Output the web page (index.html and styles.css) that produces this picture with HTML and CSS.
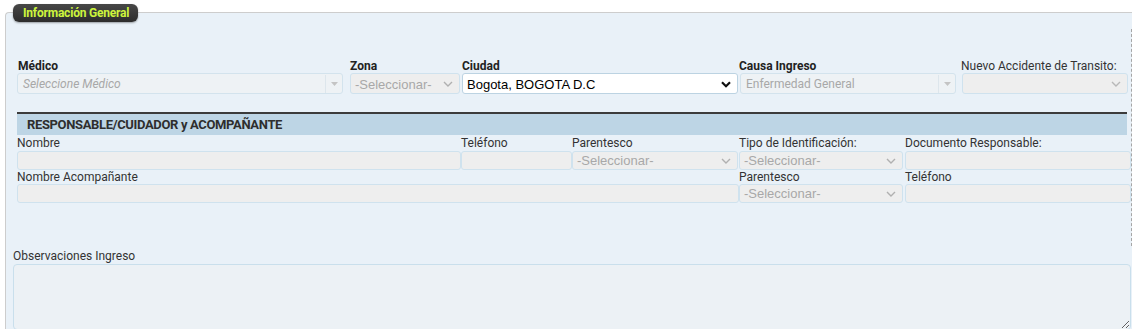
FILE: index.html
```html
<!DOCTYPE html>
<html lang="es">
<head>
<meta charset="utf-8">
<title>Información General</title>
<link rel="stylesheet" href="styles.css">
</head>
<body>
<div class="panel">
  <div class="legend">Información General</div>
  <div class="content">
    <div class="row row1">
      <div class="field f-medico">
        <label class="lbl bold">Médico</label>
        <div class="ctl s2 w-medico">
          <span class="ph italic">Seleccione Médico</span>
          <span class="s2arrow"><svg width="7" height="4" viewBox="0 0 7 4"><path d="M0 0H7L3.5 4Z" fill="#c4c4c4"/></svg></span>
        </div>
      </div>
      <div class="field f-zona">
        <label class="lbl bold">Zona</label>
        <div class="ctl dis sel w-zona">
          <span class="ph arial">-Seleccionar-</span>
          <svg class="chev" width="10" height="6" viewBox="0 0 10 6"><path d="M1 1L5 5L9 1" fill="none" stroke="#b0b0b0" stroke-width="1.4"/></svg>
        </div>
      </div>
      <div class="field f-ciudad">
        <label class="lbl bold">Ciudad</label>
        <div class="ctl white sel w-ciudad">
          <span class="val arial">Bogota, BOGOTA D.C</span>
          <svg class="chev" width="10" height="7" viewBox="0 0 10 7"><path d="M1 1.2L5 5.2L9 1.2" fill="none" stroke="#111" stroke-width="2.2"/></svg>
        </div>
      </div>
      <div class="field f-causa">
        <label class="lbl bold">Causa Ingreso</label>
        <div class="ctl s2 w-causa">
          <span class="ph">Enfermedad General</span>
          <span class="s2arrow"><svg width="7" height="4" viewBox="0 0 7 4"><path d="M0 0H7L3.5 4Z" fill="#c4c4c4"/></svg></span>
        </div>
      </div>
      <div class="field f-nuevo">
        <label class="lbl">Nuevo Accidente de Transito:</label>
        <div class="ctl dis sel w-nuevo">
          <span class="ph"></span>
          <svg class="chev" width="10" height="6" viewBox="0 0 10 6"><path d="M1 1L5 5L9 1" fill="none" stroke="#b8b8b8" stroke-width="1.4"/></svg>
        </div>
      </div>
    </div>

    <div class="section-head">RESPONSABLE/CUIDADOR y ACOMPAÑANTE</div>

    <div class="row row2">
      <div class="field c-nombre">
        <label class="lbl">Nombre</label>
        <div class="ctl dis sm"></div>
      </div>
      <div class="field c-tel">
        <label class="lbl">Teléfono</label>
        <div class="ctl dis sm"></div>
      </div>
      <div class="field c-par">
        <label class="lbl">Parentesco</label>
        <div class="ctl dis sm sel">
          <span class="ph arial">-Seleccionar-</span>
          <svg class="chev" width="10" height="6" viewBox="0 0 10 6"><path d="M1 1L5 5L9 1" fill="none" stroke="#b0b0b0" stroke-width="1.4"/></svg>
        </div>
      </div>
      <div class="field c-tipo">
        <label class="lbl">Tipo de Identificación:</label>
        <div class="ctl dis sm sel w-tipo">
          <span class="ph arial">-Seleccionar-</span>
          <svg class="chev" width="10" height="6" viewBox="0 0 10 6"><path d="M1 1L5 5L9 1" fill="none" stroke="#b0b0b0" stroke-width="1.4"/></svg>
        </div>
      </div>
      <div class="field c-doc">
        <label class="lbl">Documento Responsable:</label>
        <div class="ctl dis sm"></div>
      </div>
    </div>

    <div class="row row3">
      <div class="field c-acomp">
        <label class="lbl">Nombre Acompañante</label>
        <div class="ctl dis sm"></div>
      </div>
      <div class="field c-tipo">
        <label class="lbl">Parentesco</label>
        <div class="ctl dis sm sel w-tipo">
          <span class="ph arial">-Seleccionar-</span>
          <svg class="chev" width="10" height="6" viewBox="0 0 10 6"><path d="M1 1L5 5L9 1" fill="none" stroke="#b0b0b0" stroke-width="1.4"/></svg>
        </div>
      </div>
      <div class="field c-doc">
        <label class="lbl">Teléfono</label>
        <div class="ctl dis sm"></div>
      </div>
    </div>
  </div>

  <div class="obs">
    <label class="lbl">Observaciones Ingreso</label>
    <textarea class="obs-area"></textarea>
  </div>
</div>
</body>
</html>
```

FILE: styles.css
```css
* { box-sizing: border-box; }

html, body {
  margin: 0;
  padding: 0;
  background: #ffffff;
  overflow: hidden;
}

body {
  font-family: Roboto, "Liberation Sans", Arial, sans-serif;
  font-size: 12px;
  color: #333;
  width: 1132px;
  height: 329px;
}

.panel {
  position: relative;
  margin: 12px 0 0 5px;
  width: 1127px;
  height: 330px;
  border-top: 1px solid #cdcdcd;
  border-left: 1px solid #cdcdcd;
  border-top-left-radius: 4px;
  background: #e9f1f8;
  padding-left: 7px;
}

.legend {
  position: absolute;
  left: 7px;
  top: -9px;
  height: 18px;
  padding: 0 9px 0 10px;
  line-height: 18px;
  background: linear-gradient(#474747, #2c2c2c);
  border-radius: 6px;
  box-shadow: 0 1px 2px rgba(0,0,0,0.35);
  color: #cdf53c;
  font-weight: 700;
  font-size: 12px;
  letter-spacing: -0.2px;
  white-space: nowrap;
}

.content {
  margin-left: 4px;
  margin-top: 16px;
  width: 1115px;
  height: 217px;
  border-right: 1px dashed #a6a6a6;
  padding-top: 30px;
}

.row {
  display: flex;
  align-items: flex-start;
}

.field {
  display: flex;
  flex-direction: column;
  flex: none;
}

.lbl {
  display: block;
  font-size: 12px;
  line-height: 14px;
  color: #333;
  white-space: nowrap;
}
.bold {
  font-weight: 700;
  color: #222;
}

.row1 .lbl { margin-bottom: 0; }

.ctl {
  display: flex;
  align-items: center;
  height: 20px;
  border: 1px solid #cfe2ee;
  border-radius: 3px;
  background: #eeeeee;
  padding-left: 4px;
  overflow: hidden;
  white-space: nowrap;
}
.row1 .ctl { height: 21px; padding-top: 1px; }
.ctl.sm { height: 19px; }

.sel .ph, .sel .val { flex: 1; }
.chev { flex: none; margin-right: 6px; }

.ph { color: #a8a8a8; font-size: 12px; }
.italic { font-style: italic; }
.arial { font-family: "Liberation Sans", Arial, sans-serif; font-size: 13px; }
.val { color: #000; }

.white {
  background: #ffffff;
  border-color: #bcd3e2;
}

.s2 {
  background: #eef2f5;
  border-color: #d3e3ed;
  padding-left: 5px;
}
.s2 .ph { flex: 1; }
.s2arrow {
  flex: none;
  width: 17px;
  height: 18px;
  display: flex;
  align-items: center;
  justify-content: center;
  border-left: 1px solid #dde6ec;
}

/* row 1 columns */
.f-medico { width: 333px; padding-left: 1px; }
.f-medico .ctl { margin-left: -1px; }
.w-medico { width: 326px; }
.f-zona { width: 112px; }
.w-zona { width: 110px; }
.f-ciudad { width: 277px; }
.w-ciudad { width: 276px; }
.f-causa { width: 222px; }
.w-causa { width: 216px; margin-left: 1px; }
.f-nuevo { width: 170px; }
.w-nuevo { width: 166px; margin-left: 1px; }

.section-head {
  margin-top: 18px;
  margin-right: 4px;
  border-top: 2px solid #3b3b3b;
  background: #bdd5e5;
  height: 23px;
  line-height: 21px;
  padding-left: 10px;
  font-weight: 700;
  font-size: 13px;
  color: #2e2e2e;
  letter-spacing: -0.35px;
}

.row2 .lbl { line-height: 16px; }
.row3 .lbl { line-height: 14px; }

.c-nombre { width: 444px; }
.c-tel { width: 111px; }
.c-par { width: 167px; }
.c-par .ctl { width: 166px; }
.c-tipo { width: 166px; }
.w-tipo { width: 164px; }
.c-doc { width: 226px; }
.c-acomp { width: 722px; }

.obs {
  margin-top: 3px;
}
.obs .lbl { line-height: 15px; }
.obs-area {
  display: block;
  width: 1118px;
  height: 66px;
  margin: 0;
  border: 1px solid #c9dfec;
  border-radius: 4px;
  background: #ecf1f5;
  resize: both;
  font-family: inherit;
}
```
